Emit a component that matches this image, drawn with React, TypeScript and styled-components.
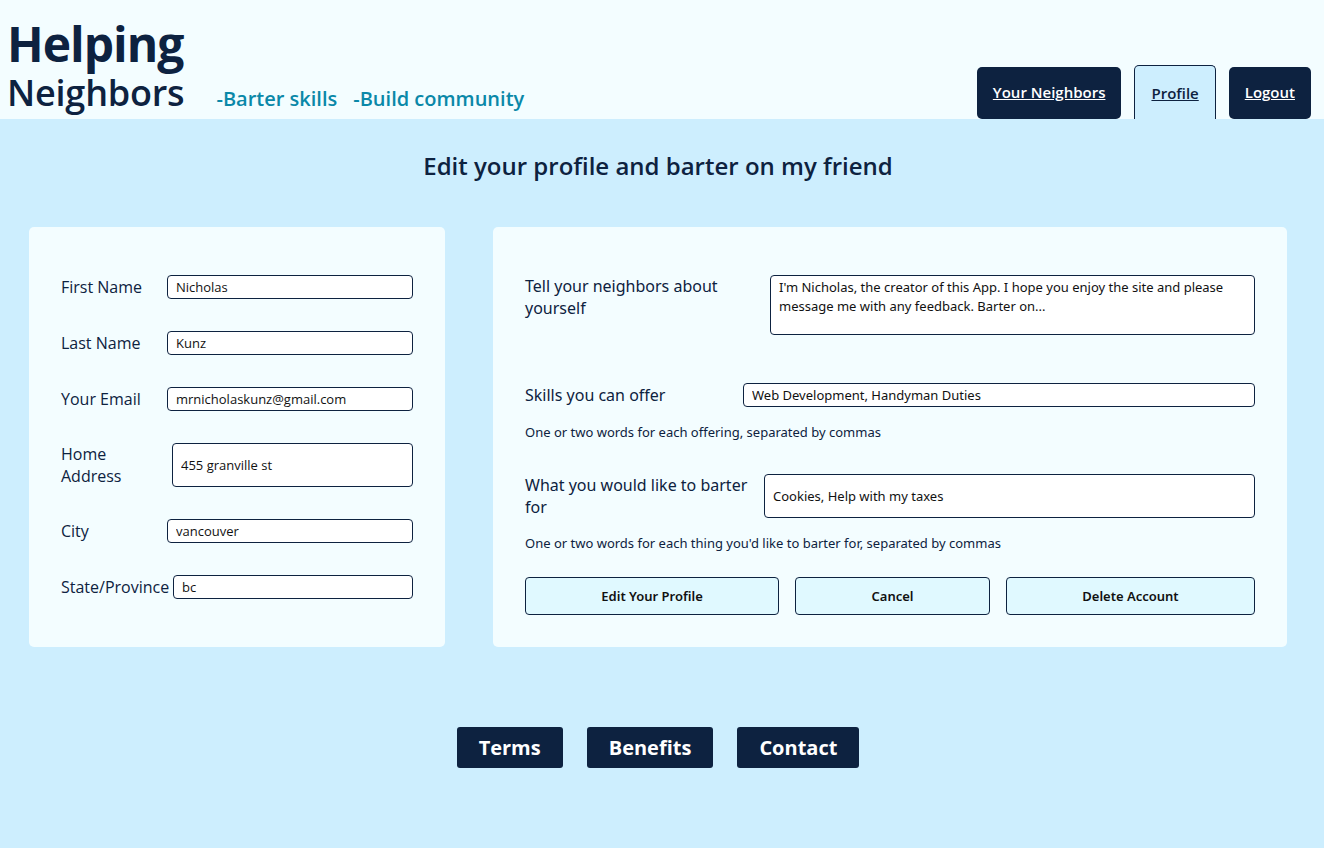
import React from 'react';
import styled, { createGlobalStyle } from 'styled-components';

const GlobalStyle = createGlobalStyle`
  html, body {
    margin: 0;
    padding: 0;
    background: #cdeefe;
    font-family: 'Open Sans', 'Noto Sans', sans-serif;
    color: #0d2240;
  }
  * { box-sizing: border-box; }
`;

const Page = styled.div`
  min-height: 100vh;
  background: #cdeefe;
  display: flex;
  flex-direction: column;
`;

const Header = styled.header`
  height: 119px;
  background: #f3fdff;
  display: flex;
  align-items: flex-end;
  justify-content: space-between;
  padding: 0 13px 0 7px;
`;

const Brand = styled.div`
  display: flex;
  align-items: last baseline;
  padding-bottom: 4px;
`;

const Logo = styled.div`
  display: flex;
  flex-direction: column;
`;

const LogoBig = styled.span`
  font-size: 48px;
  font-weight: 700;
  line-height: 44px;
  letter-spacing: -1px;
  margin-bottom: 5px;
`;

const LogoSub = styled.span`
  font-size: 36px;
  font-weight: 600;
  line-height: 44px;
  letter-spacing: -0.2px;
`;

const Taglines = styled.div`
  display: flex;
  gap: 16px;
  margin-left: 32px;
  font-size: 20px;
  font-weight: 600;
  color: #0a88a8;
`;

const Nav = styled.nav`
  display: flex;
  align-items: flex-end;
  gap: 13px;
`;

const NavButton = styled.a<{ $active?: boolean }>`
  display: flex;
  align-items: center;
  justify-content: center;
  height: ${p => (p.$active ? '54px' : '52px')};
  padding: 0 16px;
  font-size: 15px;
  font-weight: 600;
  text-decoration: underline;
  cursor: pointer;
  border-radius: ${p => (p.$active ? '5px 5px 0 0' : '5px')};
  background: ${p => (p.$active ? '#cdeefe' : '#0d2240')};
  color: ${p => (p.$active ? '#0d2240' : '#ffffff')};
  border: ${p => (p.$active ? '1.5px solid #0d2240' : 'none')};
  border-bottom: none;
  padding-bottom: ${p => (p.$active ? '0' : '2px')};
`;

const Main = styled.main`
  flex: 1;
  display: flex;
  flex-direction: column;
`;

const Title = styled.h2`
  margin: 30px 0 0;
  padding-right: 8px;
  text-align: center;
  font-size: 24px;
  font-weight: 600;
  line-height: 33px;
`;

const Cards = styled.div`
  display: grid;
  grid-template-columns: 416px 1fr;
  gap: 48px;
  padding: 0 37px 0 29px;
  margin-top: 45px;
`;

const Card = styled.section`
  background: #f3fdff;
  border-radius: 5px;
  padding: 48px 32px;
  display: flex;
  flex-direction: column;
`;

const LeftCard = styled(Card)`
  gap: 32px;
`;

const RightCard = styled(Card)`
  padding-bottom: 32px;
  font-family: 'Noto Sans', 'Open Sans', sans-serif;
  font-stretch: 87.5%;
`;

const Row = styled.div<{ $mt?: number; $top?: boolean }>`
  display: flex;
  align-items: ${p => (p.$top ? 'flex-start' : 'center')};
  margin-top: ${p => p.$mt ?? 0}px;
`;

const Label = styled.label<{ $w: number; $pr?: number }>`
  flex: 0 0 ${p => p.$w}px;
  padding-right: ${p => p.$pr ?? 0}px;
  font-size: 16px;
  line-height: 22px;
  white-space: ${p => (p.$pr ? 'normal' : 'nowrap')};
`;

const Field = styled.input<{ $h?: number }>`
  flex: 1;
  min-width: 0;
  height: ${p => p.$h ?? 24}px;
  border: 1px solid #0d2240;
  border-radius: 4px;
  background: #ffffff;
  padding: 0 8px;
  font-family: inherit;
  font-stretch: inherit;
  font-size: 13px;
  color: #111;
  outline: none;
`;

const TextArea = styled.textarea`
  flex: 1;
  height: 60px;
  border: 1px solid #0d2240;
  border-radius: 4px;
  background: #ffffff;
  padding: 2px 8px;
  font-family: inherit;
  font-stretch: inherit;
  font-size: 13px;
  line-height: 19px;
  color: #111;
  resize: none;
  outline: none;
`;

const Hint = styled.p<{ $mt: number }>`
  margin: ${p => p.$mt}px 0 0;
  font-size: 13px;
  line-height: 18px;
`;

const Actions = styled.div`
  display: flex;
  gap: 16px;
  margin-top: 25px;
`;

const ActionButton = styled.button`
  flex: 1 1 auto;
  height: 38px;
  background: #e0f9ff;
  border: 1px solid #0d2240;
  border-radius: 4px;
  font-family: inherit;
  font-stretch: inherit;
  font-size: 13px;
  font-weight: 600;
  color: #111;
  cursor: pointer;
`;

const Footer = styled.footer`
  display: flex;
  justify-content: center;
  gap: 24px;
  margin-top: 80px;
  padding-right: 8px;
  padding-bottom: 80px;
`;

const FooterButton = styled.button`
  height: 41px;
  padding: 0 22px;
  background: #0d2240;
  color: #ffffff;
  border: none;
  border-radius: 3px;
  font-family: inherit;
  font-size: 20px;
  font-weight: 700;
  cursor: pointer;
`;

const App: React.FC = () => {
  return (
    <Page>
      <GlobalStyle />
      <Header>
        <Brand>
          <Logo>
            <LogoBig>Helping</LogoBig>
            <LogoSub>Neighbors</LogoSub>
          </Logo>
          <Taglines>
            <span>-Barter skills</span>
            <span>-Build community</span>
          </Taglines>
        </Brand>
        <Nav>
          <NavButton>Your Neighbors</NavButton>
          <NavButton $active>Profile</NavButton>
          <NavButton>Logout</NavButton>
        </Nav>
      </Header>

      <Main>
        <Title>Edit your profile and barter on my friend</Title>
        <Cards>
          <LeftCard>
            <Row>
              <Label $w={106}>First Name</Label>
              <Field defaultValue="Nicholas" />
            </Row>
            <Row>
              <Label $w={106}>Last Name</Label>
              <Field defaultValue="Kunz" />
            </Row>
            <Row>
              <Label $w={106}>Your Email</Label>
              <Field defaultValue="mrnicholaskunz@gmail.com" />
            </Row>
            <Row>
              <Label $w={111} $pr={20}>Home Address</Label>
              <Field $h={44} defaultValue="455 granville st" />
            </Row>
            <Row>
              <Label $w={106}>City</Label>
              <Field defaultValue="vancouver" />
            </Row>
            <Row>
              <Label $w={112}>State/Province</Label>
              <Field defaultValue="bc" />
            </Row>
          </LeftCard>

          <RightCard>
            <Row $top>
              <Label $w={245} $pr={20}>Tell your neighbors about yourself</Label>
              <TextArea defaultValue="I'm Nicholas, the creator of this App. I hope you enjoy the site and please message me with any feedback. Barter on..." />
            </Row>
            <Row $mt={48}>
              <Label $w={218}>Skills you can offer</Label>
              <Field defaultValue="Web Development, Handyman Duties" />
            </Row>
            <Hint $mt={16}>One or two words for each offering, separated by commas</Hint>
            <Row $mt={33}>
              <Label $w={239} $pr={16}>What you would like to barter for</Label>
              <Field $h={44} defaultValue="Cookies, Help with my taxes" />
            </Row>
            <Hint $mt={16}>One or two words for each thing you'd like to barter for, separated by commas</Hint>
            <Actions>
              <ActionButton>Edit Your Profile</ActionButton>
              <ActionButton>Cancel</ActionButton>
              <ActionButton>Delete Account</ActionButton>
            </Actions>
          </RightCard>
        </Cards>

        <Footer>
          <FooterButton>Terms</FooterButton>
          <FooterButton>Benefits</FooterButton>
          <FooterButton>Contact</FooterButton>
        </Footer>
      </Main>
    </Page>
  );
};

export default App;
